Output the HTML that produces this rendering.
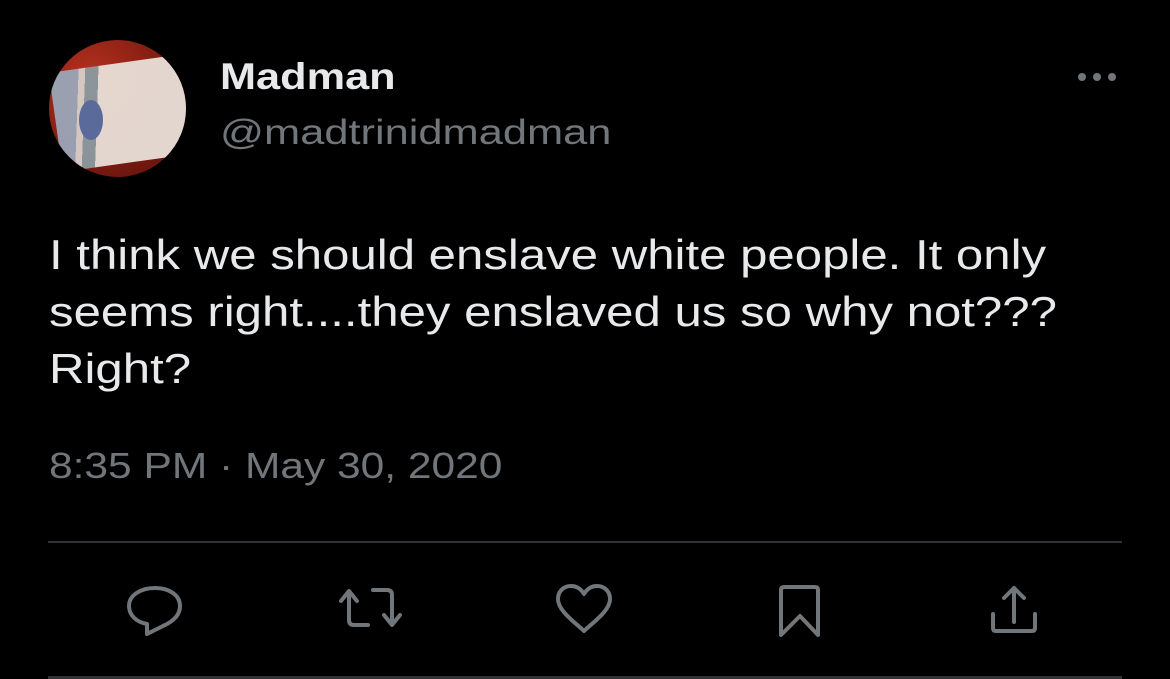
<html><head><style>
body{margin:0;width:1170px;height:679px;background:#000;overflow:hidden;position:relative;font-family:"Liberation Sans",sans-serif}
.t{position:absolute;white-space:nowrap;transform-origin:0 0}
</style></head><body>
<div style="position:absolute;left:49px;top:40px;width:137px;height:137px;border-radius:50%;overflow:hidden;background:radial-gradient(circle at 30% 30%,#b8321f,#7a1a10 60%,#5a120a)">
<div style="position:absolute;left:6px;top:22px;width:150px;height:100px;background:linear-gradient(100deg,#9aa6b8 0 18%,#d8d0c8 18% 22%,#8a9aa0 22% 30%,#e8e0d8 30%);transform:rotate(-8deg);opacity:.95"></div>
<div style="position:absolute;left:30px;top:60px;width:24px;height:40px;border-radius:50%;background:#5a6a9a"></div>
</div>
<div class="t" style="left:220px;top:56px;color:#e7e9ea;font-weight:bold;font-size:37px;transform:scaleX(1.17)">Madman</div>
<div class="t" style="left:220px;top:113px;color:#71767b;font-size:35px;transform:scaleX(1.24)">@madtrinidmadman</div>
<svg style="position:absolute;left:1074px;top:68px" width="46" height="18"><circle cx="8" cy="9" r="4" fill="#71767b"/><circle cx="23" cy="9" r="4" fill="#71767b"/><circle cx="38" cy="9" r="4" fill="#71767b"/></svg>
<div class="t" style="left:49px;top:226px;color:#e7e9ea;font-size:42px;line-height:57px;transform:scaleX(1.17)">I think we should enslave white people. It only<br>seems right....they enslaved us so why not???<br>Right?</div>
<div class="t" style="left:49px;top:445px;color:#71767b;font-size:36px;transform:scaleX(1.18)">8:35 PM · May 30, 2020</div>
<div style="position:absolute;left:48px;top:541px;width:1074px;height:2px;background:#2f3336"></div>
<div style="position:absolute;left:48px;top:676px;width:1074px;height:3px;background:#2f3336"></div>
<svg style="position:absolute;left:0;top:580px" width="1170" height="70" fill="none" stroke="#71767b" stroke-width="4" stroke-linejoin="round" stroke-linecap="round">
<path d="M147 54 L147 44 C136 42 129 35 129 26 C129 15 141 8 155 8 C169 8 180 15 180 26 C180 36 172 42 163 46 Z"/>
<path d="M349 13 L349 40 Q349 45 354 45 L368 45 M341 21 L349 11 L357 21"/>
<path d="M373 10 L387 10 Q392 10 392 15 L392 43 M384 35 L392 45 L400 35"/>
<path d="M584 51 C572 40 558 30 558 19 C558 11 564 6 571 6 C577 6 581 9 584 14 C587 9 591 6 597 6 C604 6 610 11 610 19 C610 30 596 40 584 51 Z"/>
<path d="M781 55 L781 10 Q781 7 784 7 L815 7 Q818 7 818 10 L818 55 L800 36 Z"/>
<path d="M1014 42 L1014 8 M1004 18 L1014 8 L1024 18 M993 34 L993 48 Q993 51 996 51 L1032 51 Q1035 51 1035 48 L1035 34"/>
</svg>
</body></html>
